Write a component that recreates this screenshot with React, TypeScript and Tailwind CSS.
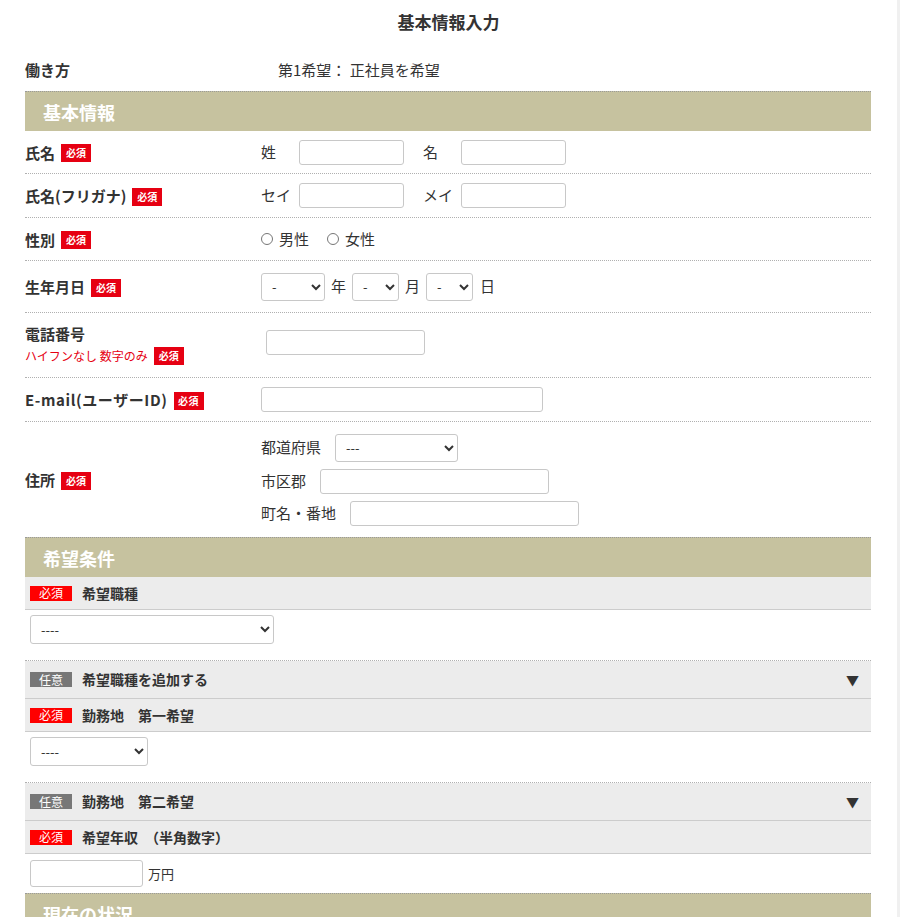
import React from "react";

const FONT = { fontFamily: '"Noto Sans CJK JP", "Noto Sans", sans-serif' };

function Req() {
  return (
    <span className="inline-flex items-center justify-center w-[30px] h-[18px] bg-[#e60012] text-white text-[10px] font-bold leading-none ml-[6px]">
      必須
    </span>
  );
}

function Badge({ kind }: { kind: "req" | "opt" }) {
  return (
    <span
      className={
        "inline-flex items-center justify-center w-[42px] h-[15px] text-white text-[12px] leading-none " +
        (kind === "req" ? "bg-[#ff0000]" : "bg-[#777777]")
      }
    >
      {kind === "req" ? "必須" : "任意"}
    </span>
  );
}

function Header({ title }: { title: string }) {
  return (
    <div className="h-[40px] bg-[#c6c29f] border-t border-dotted border-[#9a9a9a] flex items-center pl-[18px]">
      <span className="text-white text-[18px] font-bold leading-none">{title}</span>
    </div>
  );
}

function Row({ h, label, children, last }: { h: string; label: React.ReactNode; children: React.ReactNode; last?: boolean }) {
  return (
    <div className={"flex items-center " + h + (last ? "" : " border-b border-dotted border-[#b0b0b0]")}>
      <div className="w-[236px] shrink-0">{label}</div>
      <div className="flex-1 flex items-center">{children}</div>
    </div>
  );
}

const inputCls = "h-[25px] bg-white border border-[#c8c8c8] rounded-[3px]";
const selectCls = "h-[28px] bg-white border border-[#c8c8c8] rounded-[3px] text-[13px] text-[#333] pl-[6px]";

function Label({ text, wide }: { text: string; wide?: boolean }) {
  return (
    <span className={"inline-flex items-center text-[15px] font-bold text-[#333]" + (wide ? " tracking-[0.6px]" : "")}>
      {text}
      <Req />
    </span>
  );
}

function GrayRow({ kind, text, tall, arrow }: { kind: "req" | "opt"; text: string; tall?: boolean; arrow?: boolean }) {
  return (
    <div className={"flex items-center bg-[#ececec] border-b border-[#cccccc] pl-[5px] pr-[12px] " + (tall ? "h-[38px]" : "h-[33px]")}>
      <Badge kind={kind} />
      <span className="ml-[10px] text-[14px] font-bold text-[#333]">{text}</span>
      {arrow && <span className="ml-auto text-[13px] text-[#333] leading-none">▼</span>}
    </div>
  );
}

export default function App() {
  return (
    <div className="flex bg-white min-h-[917px]" style={FONT}>
      <div className="w-[897px] shrink-0">
        <div className="h-[50px] flex justify-center pt-[9px]">
          <h1 className="text-[17px] font-bold text-[#333] leading-[26px]">基本情報入力</h1>
        </div>
        <div className="mx-[25px] w-[846px]">
          <div className="h-[41px] flex items-center">
            <div className="w-[253px] text-[15px] font-bold text-[#333]">働き方</div>
            <div className="text-[15px] text-[#333]">第1希望： 正社員を希望</div>
          </div>

          <Header title="基本情報" />

          <Row h="h-[43px]" label={<Label text="氏名" />}>
            <span className="text-[15px] text-[#333] w-[38px]">姓</span>
            <input className={inputCls + " w-[105px]"} />
            <span className="text-[15px] text-[#333] ml-[19px] w-[38px]">名</span>
            <input className={inputCls + " w-[105px]"} />
          </Row>
          <Row h="h-[44px]" label={<Label text="氏名(フリガナ)" />}>
            <span className="text-[15px] text-[#333] w-[38px]">セイ</span>
            <input className={inputCls + " w-[105px]"} />
            <span className="text-[15px] text-[#333] ml-[19px] w-[38px]">メイ</span>
            <input className={inputCls + " w-[105px]"} />
          </Row>
          <Row h="h-[43px]" label={<Label text="性別" />}>
            <label className="flex items-center text-[15px] text-[#333]">
              <input type="radio" name="sex" className="w-[12px] h-[12px] m-0 mr-[6px]" />
              男性
            </label>
            <label className="flex items-center text-[15px] text-[#333] ml-[18px]">
              <input type="radio" name="sex" className="w-[12px] h-[12px] m-0 mr-[6px]" />
              女性
            </label>
          </Row>
          <Row h="h-[52px]" label={<Label text="生年月日" />}>
            <select className={selectCls + " w-[64px]"}>
              <option>-</option>
            </select>
            <span className="text-[15px] text-[#333] mx-[6px]">年</span>
            <select className={selectCls + " w-[47px]"}>
              <option>-</option>
            </select>
            <span className="text-[15px] text-[#333] mx-[6px]">月</span>
            <select className={selectCls + " w-[47px]"}>
              <option>-</option>
            </select>
            <span className="text-[15px] text-[#333] ml-[7px]">日</span>
          </Row>
          <Row
            h="h-[65px]"
            label={
              <div className="flex flex-col">
                <span className="text-[15px] font-bold text-[#333] leading-[22px]">電話番号</span>
                <span className="inline-flex items-center text-[12px] text-[#e60012] leading-[22px]">
                  ハイフンなし 数字のみ
                  <Req />
                </span>
              </div>
            }
          >
            <input className={inputCls + " w-[159px] ml-[5px] -mt-[6px]"} />
          </Row>
          <Row h="h-[44px]" label={<Label text="E-mail(ユーザーID)" wide />}>
            <input className={inputCls + " w-[282px]"} />
          </Row>
          <Row h="h-[115px]" label={<Label text="住所" />} last>
            <div className="flex flex-col gap-[7px]">
              <div className="flex items-center">
                <span className="text-[15px] text-[#333] w-[74px]">都道府県</span>
                <select className={selectCls + " w-[123px]"}>
                  <option>---</option>
                </select>
              </div>
              <div className="flex items-center">
                <span className="text-[15px] text-[#333] w-[59px]">市区郡</span>
                <input className={inputCls + " w-[229px]"} />
              </div>
              <div className="flex items-center">
                <span className="text-[15px] text-[#333] w-[89px]">町名・番地</span>
                <input className={inputCls + " w-[229px]"} />
              </div>
            </div>
          </Row>

          <Header title="希望条件" />

          <GrayRow kind="req" text="希望職種" />
          <div className="h-[51px] flex items-start pt-[5px] pl-[5px] border-b border-dotted border-[#b0b0b0]">
            <select className={selectCls + " w-[244px] h-[29px]"}>
              <option>----</option>
            </select>
          </div>
          <GrayRow kind="opt" text="希望職種を追加する" tall arrow />
          <GrayRow kind="req" text="勤務地　第一希望" />
          <div className="h-[51px] flex items-start pt-[5px] pl-[5px] border-b border-dotted border-[#b0b0b0]">
            <select className={selectCls + " w-[118px] h-[29px]"}>
              <option>----</option>
            </select>
          </div>
          <GrayRow kind="opt" text="勤務地　第二希望" tall arrow />
          <GrayRow kind="req" text="希望年収　（半角数字）" />
          <div className="h-[39px] flex items-center pl-[5px]">
            <input className={inputCls + " w-[113px] h-[27px]"} />
            <span className="text-[13px] text-[#333] ml-[5px]">万円</span>
          </div>

          <Header title="現在の状況" />
          <div className="h-[60px]" />
        </div>
      </div>
      <div className="flex-1 bg-[#f0f0f0]" />
    </div>
  );
}
